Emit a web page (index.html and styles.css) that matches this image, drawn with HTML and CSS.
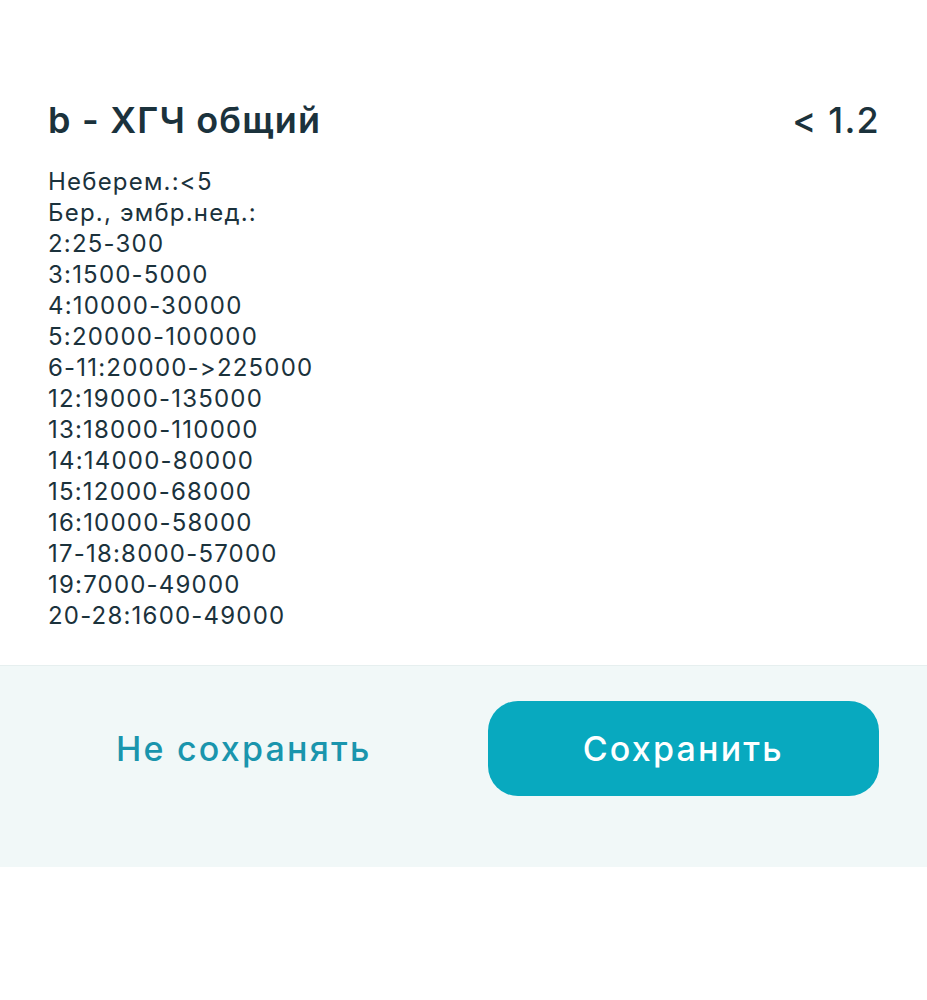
FILE: index.html
```html
<!DOCTYPE html>
<html lang="ru">
<head>
    <meta charset="UTF-8">
    <meta name="viewport" content="width=device-width, initial-scale=1.0">
    <title>ХГЧ общий</title>
    <link rel="stylesheet" href="styles.css">
</head>
<body>
    <div class="sheet">
        <div class="result-head">
            <h1 class="result-name">b - ХГЧ общий</h1>
            <span class="result-value">&lt; 1.2</span>
        </div>

        <div class="norms">
            <p>Неберем.:&lt;5</p>
            <p>Бер., эмбр.нед.:</p>
            <p>2:25-300</p>
            <p>3:1500-5000</p>
            <p>4:10000-30000</p>
            <p>5:20000-100000</p>
            <p>6-11:20000-&gt;225000</p>
            <p>12:19000-135000</p>
            <p>13:18000-110000</p>
            <p>14:14000-80000</p>
            <p>15:12000-68000</p>
            <p>16:10000-58000</p>
            <p>17-18:8000-57000</p>
            <p>19:7000-49000</p>
            <p>20-28:1600-49000</p>
        </div>
    </div>

    <div class="actions">
        <button class="btn btn-ghost">Не сохранять</button>
        <button class="btn btn-primary">Сохранить</button>
    </div>
</body>
</html>
```

FILE: styles.css
```css
* {
    margin: 0;
    padding: 0;
    box-sizing: border-box;
    font-family: 'Inter', 'Noto Sans', sans-serif;
}

body {
    background-color: #ffffff;
    color: #1b323c;
}

.sheet {
    padding: 98px 48px 34px;
}

.result-head {
    display: flex;
    justify-content: space-between;
    align-items: center;
    margin-bottom: 24px;
}

.result-name {
    font-size: 36px;
    font-weight: 600;
    line-height: 44px;
    letter-spacing: 1.2px;
}

.result-value {
    font-size: 36px;
    font-weight: 500;
    line-height: 44px;
    letter-spacing: 1.2px;
    margin-right: -1px;
}

.norms p {
    font-size: 24px;
    line-height: 31px;
    letter-spacing: 1.2px;
}

.actions {
    background-color: #f1f8f8;
    border-top: 1px solid #e6efef;
    padding: 35px 48px 71px;
    display: grid;
    grid-template-columns: 1fr 1fr;
    gap: 48px;
}

.btn {
    height: 95px;
    border: none;
    border-radius: 30px;
    font-size: 34px;
    font-weight: 500;
    letter-spacing: 2.2px;
    cursor: pointer;
}

.btn-ghost {
    background: none;
    color: #1a95ad;
}

.btn-primary {
    background-color: #08a9bf;
    color: #ffffff;
}
```
